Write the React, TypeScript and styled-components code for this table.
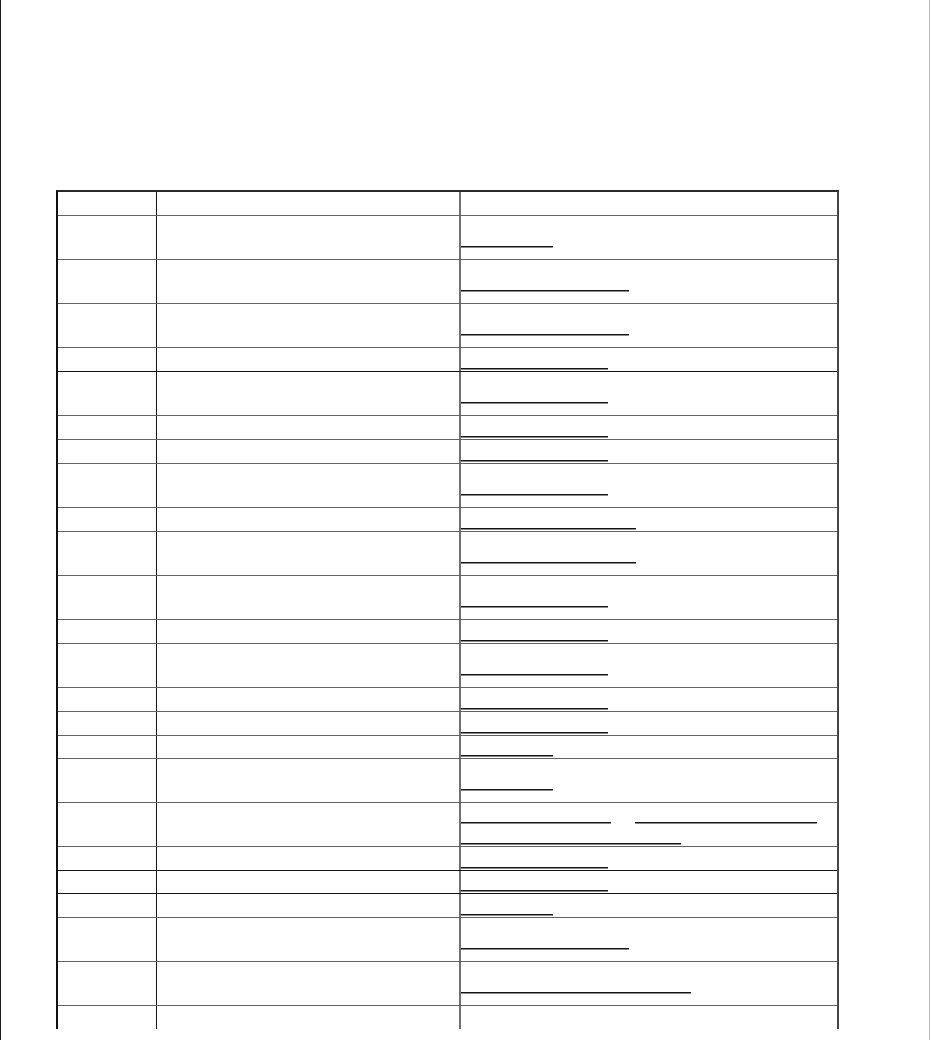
import React from 'react'
import styled, { createGlobalStyle } from 'styled-components'

type Row = {
  tall?: boolean
  short?: boolean
  dark?: boolean
  open?: boolean
  links: number[][]
}

// widths of the underlined links in the last column, one array per line
const rows: Row[] = [
  { tall: true, links: [[92]] },
  { tall: true, links: [[168]] },
  { tall: true, links: [[168]] },
  { dark: true, links: [[147]] },
  { tall: true, links: [[147]] },
  { links: [[147]] },
  { links: [[147]] },
  { tall: true, links: [[147]] },
  { links: [[175]] },
  { tall: true, links: [[175]] },
  { tall: true, links: [[147]] },
  { links: [[147]] },
  { tall: true, links: [[147]] },
  { links: [[147]] },
  { links: [[147]] },
  { short: true, links: [[92]] },
  { tall: true, links: [[92]] },
  { tall: true, links: [[150, 182], [220]] },
  { dark: true, links: [[147]] },
  { short: true, dark: true, links: [[147]] },
  { links: [[92]] },
  { tall: true, links: [[168]] },
  { tall: true, links: [[230]] },
  { short: true, open: true, links: [] }
]

function App() {
  return (
    <>
      <GlobalStyle />
      <Page>
        <Table>
          <HeadRow>
            <FirstCell />
            <MiddleCell />
            <LinkCell />
          </HeadRow>
          {rows.map((row, index) => (
            <BodyRow key={index} $tall={row.tall} $short={row.short} $dark={row.dark} $open={row.open}>
              <FirstCell />
              <MiddleCell />
              <LinkCell>
                {row.links.map((line, li) => (
                  <LinkLine key={li}>
                    {line.map((w, wi) => (
                      <Anchor key={wi} href='#' style={{ width: w }} />
                    ))}
                  </LinkLine>
                ))}
              </LinkCell>
            </BodyRow>
          ))}
        </Table>
      </Page>
    </>
  )
}
export default App

const GlobalStyle = createGlobalStyle`
  html, body {
    margin: 0;
    padding: 0;
    background: #ffffff;
    font-family: "Liberation Sans", Arial, sans-serif;
  }
`

const Page = styled.div`
  box-sizing: border-box;
  width: 930px;
  height: 1040px;
  overflow: hidden;
  border-left: 1px solid #1c1c1c;
  border-right: 1px solid #b9b9b9;
  padding: 190px 0 0 55px;
`

const Table = styled.div`
  box-sizing: border-box;
  width: 783px;
  border-left: 2px solid #111;
  border-top: 2px solid #2a2a2a;
  border-right: 2px solid #474747;
`

const HeadRow = styled.div`
  display: grid;
  grid-template-columns: 99px 304px 1fr;
  height: 24px;
  box-sizing: border-box;
  border-bottom: 1px solid #626262;
`

const BodyRow = styled.div<{ $tall?: boolean; $short?: boolean; $dark?: boolean; $open?: boolean }>`
  display: grid;
  grid-template-columns: 99px 304px 1fr;
  box-sizing: border-box;
  height: ${(p) => (p.$tall ? 44 : p.$short ? 23 : 24)}px;
  border-bottom: ${(p) => (p.$open ? 'none' : `1px solid ${p.$dark ? '#141414' : '#626262'}`)};
`

const FirstCell = styled.div`
  border-right: 1px solid #151515;
`

const MiddleCell = styled.div`
  border-right: 2px solid #707070;
`

const LinkCell = styled.div`
  display: flex;
  flex-direction: column;
  justify-content: center;
  font-size: 13px;
`

const LinkLine = styled.div`
  display: flex;
  align-items: center;
  gap: 24px;
  height: 21px;
`

const Anchor = styled.a`
  display: block;
  height: 18px;
  box-sizing: border-box;
  border-bottom: 1px solid #141414;
  box-shadow: 0 1px 0 #8a8a8a;
  color: #fff;
  text-decoration: none;
`
